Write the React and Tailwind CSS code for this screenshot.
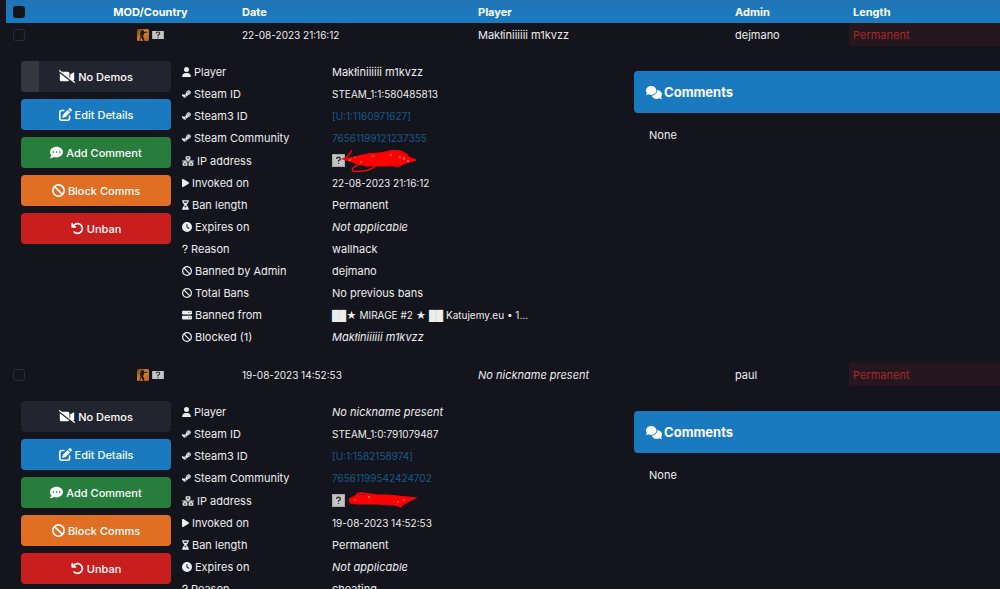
import { useState } from 'react';
import {
  FaVideoSlash,
  FaPenToSquare,
  FaCommentDots,
  FaBan,
  FaArrowRotateLeft,
  FaUser,
  FaSteamSymbol,
  FaNetworkWired,
  FaPlay,
  FaHourglassHalf,
  FaClock,
  FaQuestion,
  FaServer,
  FaComments,
} from 'react-icons/fa6';

const bans = [
  {
    id: 1,
    date: '22-08-2023 21:16:12',
    player: 'Makłiniiiiii m1kvzz',
    named: true,
    admin: 'dejmano',
    length: 'Permanent',
    steamId: 'STEAM_1:1:580485813',
    steam3: '[U:1:1160971627]',
    community: '76561199121237355',
    reason: 'wallhack',
    demoProgress: true,
  },
  {
    id: 2,
    date: '19-08-2023 14:52:53',
    player: 'No nickname present',
    named: false,
    admin: 'paul',
    length: 'Permanent',
    steamId: 'STEAM_1:0:791079487',
    steam3: '[U:1:1582158974]',
    community: '76561199542424702',
    reason: 'cheating',
    demoProgress: false,
  },
];

const GameIcon = () => (
  <svg className="h-3 w-3" viewBox="0 0 24 24" aria-hidden="true">
    <defs>
      <linearGradient id="game" x1="0" y1="0" x2="1" y2="1">
        <stop offset="0" stopColor="#7a4012" />
        <stop offset="0.5" stopColor="#d08432" />
        <stop offset="1" stopColor="#a85c1c" />
      </linearGradient>
    </defs>
    <rect width="24" height="24" rx="3" fill="url(#game)" />
    <path
      d="M9 3l3-1 2 2v2l7-1v2l-6 1-1 3-2 3 2 4 1 6h-3l-2-5-2-2-2 7H4l3-9-1-5 1-4z"
      fill="#2b1608"
    />
  </svg>
);

const UnknownFlag = ({ className, box }) => (
  <svg className={className} viewBox={box} aria-hidden="true">
    <rect width="24" height="24" fill="#a8a8a8" />
    <rect x="2" y="2" width="20" height="20" fill="#c4c4c4" />
    <path d="M8.500 9q0-3 3.500-3t3.500 3q0 1.500-3.500 3.500v2M12 16.500v2" fill="none" stroke="#2f2f2f" strokeWidth="2.400" />
  </svg>
);

const Scribble = ({ first }) =>
  first ? (
    <svg className="absolute left-2 -top-px h-6 w-20" viewBox="0 0 80 24" fill="none" stroke="#ff0000" aria-hidden="true">
      <path d="M5 11L18 8 27 6 40 5 50 3 58 3 64 6 71 10 76 12 69 14 58 17 48 18 38 18 26 18 16 15z" fill="#ff0000" />
      <path d="M12 2Q8 9 3 11L20 16Q10 20 13 23Q28 25 37 17M46 4Q62 0 68 8M52 17L58 19 64 15 76 12" strokeWidth="1.500" />
      <path d="M10 11v2M15 9v1M20 14h2M32 8h2M50 7h2M60 8v2M64 9v3M67 13h2" stroke="#f3b0b0" />
    </svg>
  ) : (
    <svg className="absolute left-2 -top-px h-6 w-20" viewBox="0 0 80 24" fill="none" stroke="#ff0000" aria-hidden="true">
      <path d="M9 11L17 7 30 7 46 7 58 8 74 10 68 13 60 16 50 17 38 16 26 16 16 16 10 15z" fill="#ff0000" />
      <path d="M17 10Q14 5 22 5L36 7M46 8L75 10 62 17 52 16 62 19" strokeWidth="1.500" />
      <path d="M14 12h2M28 9h2M58 13v2M64 11v2" stroke="#f3b0b0" />
    </svg>
  );

const ActionButton = ({ icon: Icon, iconWidth = 'w-[13px]', color, progress, children }) => (
  <button
    type="button"
    className={`relative flex h-[31px] w-full items-center justify-center gap-[3px] overflow-hidden rounded text-[11px] font-medium text-white ${color}`}
  >
    {progress && <span className="absolute inset-y-0 left-0 w-[18px] bg-[#343640]" />}
    <Icon className={`h-[13px] ${iconWidth}`} />
    <span>{children}</span>
  </button>
);

const Detail = ({ icon: Icon, iconWidth = 'w-[10px]', label, italic, numeric, children }) => (
  <div className="flex min-h-[22px] items-center">
    <dt className="flex w-[150px] shrink-0 items-center gap-[3px]">
      <Icon className={`h-[10px] ${iconWidth}`} />
      {label}
    </dt>
    <dd className={`${italic ? 'italic' : ''} ${numeric ? 'text-[10px]' : ''}`}>{children}</dd>
  </div>
);

const BanDetails = ({ ban }) => (
  <div className="grid h-[317px] grid-cols-[161px_21fr_17fr] pt-[15px] pl-[15px]">
    {/* Actions */}
    <div className="flex flex-col gap-[7px] pr-[11px]">
      <ActionButton icon={FaVideoSlash} iconWidth="w-4" color="bg-[#22242f]" progress={ban.demoProgress}>
        No Demos
      </ActionButton>
      <ActionButton icon={FaPenToSquare} color="bg-[#1a7abf]">Edit Details</ActionButton>
      <ActionButton icon={FaCommentDots} color="bg-[#277d3c]">Add Comment</ActionButton>
      <ActionButton icon={FaBan} color="bg-[#e06e23]">Block Comms</ActionButton>
      <ActionButton icon={FaArrowRotateLeft} color="bg-[#c81e1e]">Unban</ActionButton>
    </div>

    {/* Ban information */}
    <dl>
      <Detail icon={FaUser} iconWidth="w-[9px]" label="Player" italic={!ban.named}>{ban.player}</Detail>
      <Detail icon={FaSteamSymbol} iconWidth="w-[9px]" label="Steam ID" numeric>{ban.steamId}</Detail>
      <Detail icon={FaSteamSymbol} iconWidth="w-[9px]" label="Steam3 ID" numeric>
        <a href="#steam3" className="text-[#165a8c]">{ban.steam3}</a>
      </Detail>
      <Detail icon={FaSteamSymbol} iconWidth="w-[9px]" label="Steam Community" numeric>
        <a href="#community" className="text-[#165a8c]">{ban.community}</a>
      </Detail>
      <Detail icon={FaNetworkWired} iconWidth="w-3" label="IP address">
        <span className="relative flex h-[23px] items-center">
          <UnknownFlag className="h-[13px] w-[13px]" box="0 0 24 24" />
          <Scribble first={ban.id === 1} />
        </span>
      </Detail>
      <Detail icon={FaPlay} iconWidth="w-[7px]" label="Invoked on" numeric>{ban.date}</Detail>
      <Detail icon={FaHourglassHalf} iconWidth="w-[7px]" label="Ban length">{ban.length}</Detail>
      <Detail icon={FaClock} label="Expires on" italic>Not applicable</Detail>
      <Detail icon={FaQuestion} iconWidth="w-[6px]" label="Reason">{ban.reason}</Detail>
      <Detail icon={FaBan} label="Banned by Admin">{ban.admin}</Detail>
      <Detail icon={FaBan} label="Total Bans">No previous bans</Detail>
      <Detail icon={FaServer} label="Banned from" numeric>██★ MIRAGE #2 ★ ██ Katujemy.eu • 1...</Detail>
      <Detail icon={FaBan} label="Blocked (1)" italic>{ban.player}</Detail>
    </dl>

    {/* Comments */}
    <section className="pt-[10px]">
      <h2 className="flex h-[42px] items-center gap-[2px] rounded-l bg-[#1a7abf] pl-3 text-[13px] font-bold text-white">
        <FaComments className="h-[13px] w-4" />
        Comments
      </h2>
      <p className="px-[15px] py-[14px]">None</p>
    </section>
  </div>
);

const App = () => {
  const [selected, setSelected] = useState([]);

  const toggle = (id) => {
    setSelected(selected.includes(id) ? selected.filter((s) => s !== id) : [...selected, id]);
  };

  const toggleAll = () => {
    setSelected(selected.length === bans.length ? [] : bans.map((ban) => ban.id));
  };

  return (
    <main className="h-screen overflow-hidden bg-[#14141c] pl-[6px] font-[Inter,'Liberation_Sans',sans-serif] text-[11px] leading-4 text-[#ededed]">
      <table className="w-full table-fixed border-collapse text-left">
        <thead>
          <tr className="h-[23px] bg-linear-to-b from-[#2074b4] to-[#1a7bc1] text-white">
            <th className="w-[57px] pl-[7px]">
              <input
                type="checkbox"
                aria-label="Select all bans"
                checked={selected.length === bans.length}
                onChange={toggleAll}
                className="block h-3 w-3 appearance-none rounded-[3px] bg-[#14141c] checked:bg-white"
              />
            </th>
            <th className="w-[175px] text-center">MOD/Country</th>
            <th className="w-[236px] pl-1">Date</th>
            <th className="w-[257px] pl-1">Player</th>
            <th className="w-[118px] pl-1">Admin</th>
            <th className="w-[151px] pl-1">Length</th>
          </tr>
        </thead>
        {bans.map((ban) => (
          <tbody key={ban.id}>
            <tr className="h-[23px]">
              <td className="pl-[7px]">
                <input
                  type="checkbox"
                  aria-label={`Select ban of ${ban.player}`}
                  checked={selected.includes(ban.id)}
                  onChange={() => toggle(ban.id)}
                  className="block h-3 w-3 appearance-none rounded-[3px] border border-[#2b2c37] checked:bg-white"
                />
              </td>
              <td>
                <div className="flex items-center justify-center gap-[3px]">
                  <GameIcon />
                  <UnknownFlag className="h-2 w-3" box="0 4 24 16" />
                </div>
              </td>
              <td className="pl-1 text-[10px]">{ban.date}</td>
              <td className={ban.named ? 'pl-1' : 'pl-1 italic'}>{ban.player}</td>
              <td className="pl-1">{ban.admin}</td>
              <td className="bg-[#26161d] pl-1 text-[#a8282d]">{ban.length}</td>
            </tr>
            <tr>
              <td colSpan={6}>
                <BanDetails ban={ban} />
              </td>
            </tr>
          </tbody>
        ))}
      </table>
    </main>
  );
};

export default App;
